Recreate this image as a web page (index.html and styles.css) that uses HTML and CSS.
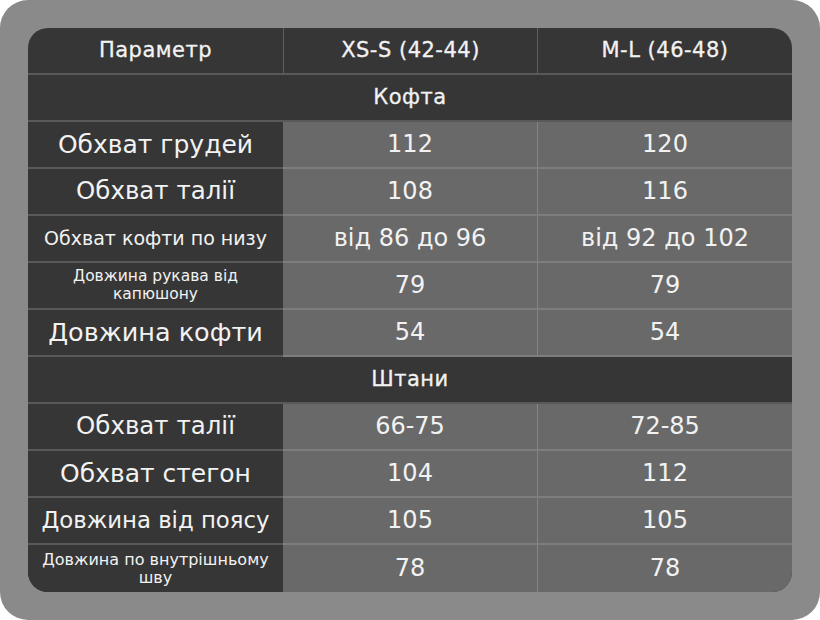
FILE: index.html
```html
<!DOCTYPE html>
<html lang="uk">
<head>
<meta charset="utf-8">
<link rel="stylesheet" href="styles.css">
</head>
<body>
<div class="panel">
  <div class="table">
    <div class="cell head">Параметр</div>
    <div class="cell head sep">XS-S (42-44)</div>
    <div class="cell head sep">M-L (46-48)</div>

    <div class="cell section">Кофта</div>

    <div class="cell name n-chest">Обхват грудей</div>
    <div class="cell val">112</div>
    <div class="cell val sep">120</div>

    <div class="cell name n-waist">Обхват талії</div>
    <div class="cell val">108</div>
    <div class="cell val sep">116</div>

    <div class="cell name n-hem">Обхват кофти по низу</div>
    <div class="cell val">від 86 до 96</div>
    <div class="cell val sep">від 92 до 102</div>

    <div class="cell name n-sleeve">Довжина рукава від<br>капюшону</div>
    <div class="cell val">79</div>
    <div class="cell val sep">79</div>

    <div class="cell name n-length">Довжина кофти</div>
    <div class="cell val">54</div>
    <div class="cell val sep">54</div>

    <div class="cell section">Штани</div>

    <div class="cell name n-waist">Обхват талії</div>
    <div class="cell val">66-75</div>
    <div class="cell val sep">72-85</div>

    <div class="cell name n-hips">Обхват стегон</div>
    <div class="cell val">104</div>
    <div class="cell val sep">112</div>

    <div class="cell name n-belt">Довжина від поясу</div>
    <div class="cell val">105</div>
    <div class="cell val sep">105</div>

    <div class="cell name n-inseam last">Довжина по внутрішньому<br>шву</div>
    <div class="cell val last">78</div>
    <div class="cell val sep last">78</div>
  </div>
</div>
</body>
</html>
```

FILE: styles.css
```css
html, body {
  margin: 0;
  padding: 0;
  background: #ffffff;
}

body {
  width: 820px;
  height: 620px;
  font-family: "DejaVu Sans", "Noto Sans", sans-serif;
  color: #f2f2f2;
}

.panel {
  box-sizing: border-box;
  width: 820px;
  height: 620px;
  padding: 28px;
  background: #8a8a8a;
  border-radius: 28px;
}

.table {
  display: grid;
  grid-template-columns: 255px 254px 255px;
  grid-auto-rows: 47px;
  background: #363636;
  border-radius: 20px;
  overflow: hidden;
}

.cell {
  box-sizing: border-box;
  display: flex;
  align-items: center;
  justify-content: center;
  text-align: center;
  border-bottom: 2px solid #595959;
  line-height: 1.1;
}

.head,
.section {
  font-size: 21px;
  letter-spacing: 0.5px;
  -webkit-text-stroke: 0.3px #f2f2f2;
}

.head.sep {
  border-left: 1px solid #5f5f5f;
}

.section {
  grid-column: 1 / 4;
}

.name {
  background: #363636;
}

.val {
  background: #696969;
  border-bottom-color: #7d7d7d;
  font-size: 24px;
}

.val.sep {
  border-left: 1px solid #858585;
}

.n-chest { font-size: 25px; }
.n-waist { font-size: 24.5px; }
.n-hem { font-size: 19px; }
.n-sleeve { font-size: 15.5px; }
.n-length { font-size: 25.5px; }
.n-hips { font-size: 25px; }
.n-belt { font-size: 22.8px; }
.n-inseam { font-size: 16px; }

.last {
  border-bottom: none;
}
```
